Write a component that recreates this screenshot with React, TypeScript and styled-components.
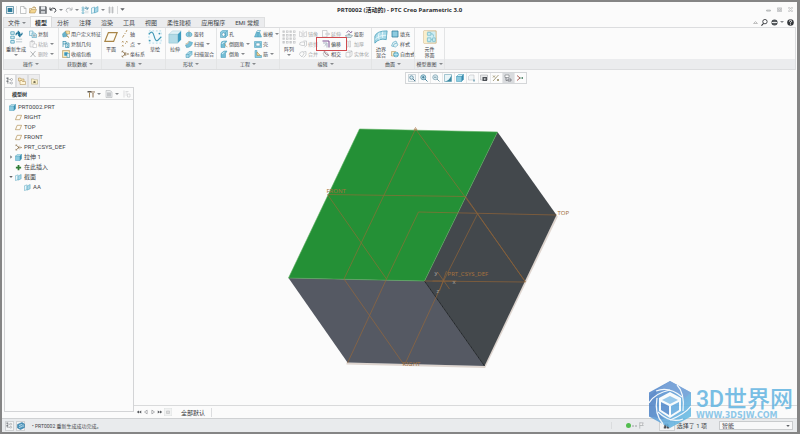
import React from "react";
import styled, { createGlobalStyle, css } from "styled-components";

const GlobalStyle = createGlobalStyle`
  * { box-sizing: border-box; }
  body {
    margin: 0;
    font-family: Roboto, "Noto Sans CJK SC", sans-serif;
    font-size: 6px;
    line-height: 8px;
    color: #414448;
  }
  button, select {
    font: inherit;
    color: inherit;
    border: 0;
    padding: 0;
    margin: 0;
    background: none;
    white-space: nowrap;
  }
`;

/* ---------- icons ---------- */

const TEAL = "#3f97b5";
const SKY = "#a9d8e8";
const INK = "#54585d";
const TAN = "#a98547";
const GREY = "#b4b7ba";

const cube = (
  <>
    <path d="M1 5l4-4h10l-4 4z" fill="#d3eef5" stroke={TEAL} />
    <path d="M11 5l4-4v10l-4 4z" fill="#3789ad" stroke={TEAL} />
    <path d="M1 5h10v10H1z" fill="#8ccbe0" stroke={TEAL} />
  </>
);

const icons: Record<string, React.ReactNode> = {
  app: (
    <>
      <path d="M1 1h14v14H1z" fill="#e5f1f5" stroke="#49809a" strokeWidth="1.5" />
      <path d="M4 4h8v8H4z" fill="#2c7c9c" />
      <path d="M3 4v8M13 4v8" stroke="#7fa7b5" />
    </>
  ),
  page: <path d="M3 1h7l4 4v10H3zM10 1v4h4" fill="#fdfdfd" stroke="#8d9093" />,
  open: (
    <>
      <path d="M1 14V5h5l1-2h6v3" fill="#fbf1d2" stroke={TAN} />
      <path d="M1 14l3-7h11l-3 7z" fill="#f2d590" stroke={TAN} />
      <path d="M8 2q4-2 5 2" fill="none" stroke={TAN} />
    </>
  ),
  save: (
    <>
      <path d="M1 1h13l1 1v13H1z" fill="#75797e" stroke="#5d6166" />
      <path d="M4 1h8v6H4z" fill="#e8eaec" />
      <path d="M4 10h8v5H4z" fill="#c8cbce" />
    </>
  ),
  undo: <path d="M2 3v5h5M2 8q5-6 10-3q4 4-1 8" fill="none" stroke="#3d4146" strokeWidth="2" />,
  redo: <path d="M14 3v5H9M14 8q-5-6-10-3q-4 4 1 8" fill="none" stroke={GREY} strokeWidth="2" />,
  regen: (
    <>
      <path d="M2 2h4v3H2zM2 7h4v3H2zM2 12h4v3H2z" fill="#d8edf3" stroke={TEAL} strokeWidth=".8" />
      <path d="M8 13.5h7M8 10.5h7" stroke="#b4c2c9" />
      <path d="M8 6q0-3 3-3M10 1l2 2-2 2M15 3q0 3-3 3M13 4l-2 2 2 2" fill="none" stroke="#1f7396" strokeWidth="1.3" />
    </>
  ),
  copy: (
    <>
      <path d="M1 2h7v9H1z" fill="#eaf5f8" stroke={TEAL} />
      <path d="M6 6h6l3 3v6H6z" fill="#cfe8f0" stroke={TEAL} />
      <path d="M8 10h5M8 12h5" stroke={INK} strokeWidth=".8" />
    </>
  ),
  paste: (
    <>
      <path d="M2 3h9v11H2zM5 1h3v3H5z" fill="#f3f3f3" stroke={GREY} />
      <path d="M8 8h7v7H8z" fill="#fff" stroke={GREY} />
    </>
  ),
  cross: <path d="M3 3l10 11M13 2L3 14" stroke="#a0a3a6" strokeWidth="1.6" />,
  udf: (
    <>
      <path d="M1 8l5-5 6 2-3 8-7 1z" fill="#69b3cc" stroke={TEAL} />
      <path d="M7 2h8v6H9z" fill="#f6e3a9" stroke={TAN} />
      <path d="M9 11l5 4" stroke={TAN} strokeWidth="2" />
    </>
  ),
  geom: (
    <>
      <path d="M2 2v12M2 3h6v5H2M8 6h6v9H7z" fill="#d6edf3" stroke="#2b86a6" strokeWidth="1.3" />
      <path d="M10 9h2v4h-2" fill="none" stroke="#2b86a6" />
    </>
  ),
  shrink: (
    <>
      <path d="M1 1h14v14H1z" fill="#f2e4ae" stroke={TAN} />
      <path d="M4 4h8v8H4z" fill="#3c97b6" stroke="#fff" />
      <path d="M10 7h5v8h-5z" fill="#dff1f5" stroke={TEAL} />
    </>
  ),
  plane: <path d="M5 3h10l-4 10H1z" fill="#fefcf6" stroke={TAN} strokeWidth="1.4" />,
  axis: <path d="M3 15l3-5M7.5 8l1-2M10 4l2-4" stroke={TAN} strokeWidth="1.6" />,
  point: <path d="M2 2l3 3M5 2L2 5M10 2l3 3M13 2l-3 3M2 10l3 3M5 10l-3 3M8 7h2" stroke={TAN} strokeWidth="1.3" />,
  csys: <path d="M8 8h7M13 6l2 2-2 2M8 8L2 2M2 5V2h3M8 8l-6 6M2 11v3h3M6 4l4 8M10 4l-4 8" fill="none" stroke="#876b43" strokeWidth="1.2" />,
  sketch: (
    <>
      <path d="M1 1h14v14H1z" fill="#f3fafc" stroke={SKY} strokeDasharray="2 2" />
      <path d="M1 5q4-6 6 2t5 4l3-3" fill="none" stroke={TEAL} strokeWidth="1.3" />
      <circle cx="2" cy="12" r="1" fill={TEAL} />
      <circle cx="13" cy="4" r="1" fill={TEAL} />
    </>
  ),
  cube,
  extrude: (
    <>
      <path d="M1 5l4-4h10l-4 4z" fill="#dff1f6" stroke="#a3cbd7" strokeWidth=".6" />
      <path d="M11 5l4-4v10l-4 4z" fill="#3c9cc0" />
      <path d="M1 5h10v10H1z" fill="#b3dbe7" stroke="#8abfd0" strokeWidth=".6" />
    </>
  ),
  revolve: (
    <>
      <path d="M8 1v14" stroke={TAN} strokeDasharray="3 1" />
      <path d="M7 4Q1 6 2 10t5 3zM9 4q6 2 5 6t-5 3z" fill="#8ccbe0" stroke={TEAL} />
    </>
  ),
  sweep: (
    <>
      <path d="M1 10q6 0 8-7l6 2q-2 10-12 10z" fill="#79bfd6" stroke={TEAL} />
      <path d="M1 8q5 0 7-6" fill="none" stroke={TAN} />
    </>
  ),
  blend: (
    <>
      <path d="M2 9l6-6h6v6l-6 6H2z" fill="#a8d8e7" stroke={TEAL} />
      <path d="M2 9h6v6M8 9l6-6" fill="none" stroke={TEAL} />
    </>
  ),
  hole: (
    <>
      <path d="M1 4l4-3h10v10l-4 4H1z" fill="#8ccbe0" stroke={TEAL} />
      <ellipse cx="7" cy="9" rx="3" ry="3.5" fill="#fff" stroke="#2c7c9c" />
      <path d="M11 5v10M11 5l4-4" stroke={TEAL} />
    </>
  ),
  round: (
    <>
      <path d="M2 15V8q0-6 6-6h6l-4 5v8z" fill="#74bdd5" stroke={TEAL} />
      <path d="M10 7q0 6 5 7" fill="none" stroke={TAN} />
      <path d="M4 8q1-4 5-4" fill="none" stroke="#fff" strokeWidth="1.5" />
    </>
  ),
  chamfer: (
    <>
      <path d="M2 15V7l6-5h6l-3 5v8z" fill="#74bdd5" stroke={TEAL} />
      <path d="M4 8l5-4" stroke="#fff" strokeWidth="1.5" />
    </>
  ),
  draft: (
    <>
      <path d="M1 14L5 4h6l4 10z" fill="#74bdd5" stroke={TEAL} />
      <path d="M5 4l2-3h6l-2 3M8 4v10" fill="#def1f6" stroke={TEAL} />
    </>
  ),
  shell: (
    <>
      <path d="M1 3h14v12H1z" fill="#8ccbe0" stroke={TEAL} />
      <path d="M4 6h8v6H4z" fill="#fff" stroke="#2c7c9c" />
    </>
  ),
  rib: (
    <>
      <path d="M2 1h4v10h9v4H2z" fill="#8ccbe0" stroke={TEAL} />
      <path d="M6 4l7 7H6z" fill="#f2dc9a" stroke={TAN} />
    </>
  ),
  pattern: (
    <g fill="#f5f5f5" stroke="#c3c5c7" strokeWidth=".8">
      {[1, 5, 9, 13].map((y) => [1, 5, 9, 13].map((x) => <rect key={`${x}-${y}`} x={x} y={y} width="2" height="2" />))}
    </g>
  ),
  mirror: <path d="M1 3l5 3v7H1zM15 3l-5 3v7h5zM8 1v14" fill="none" stroke={GREY} />,
  trim: <path d="M1 9q0-5 5-5h5v7H6zM9 2h6v9l-4 3" fill="none" stroke={GREY} strokeWidth="1.2" />,
  merge: <path d="M1 9q0-5 6-6l3 4-4 7zM8 4l6-1v7l-5 5" fill="none" stroke={GREY} strokeWidth="1.2" />,
  extend: <path d="M1 1h9v13H1zM6 8h9M12 5l3 3-3 3" fill="none" stroke={GREY} strokeWidth="1.2" />,
  offset: (
    <>
      <path d="M1 2h13v13" fill="none" stroke="#7d4e93" strokeWidth="2" />
      <path d="M2 6h8v9" fill="none" stroke="#8b9ab0" strokeWidth="1.4" />
      <path d="M4 13l4-4M8 11V9H6" fill="none" stroke="#9ca9ba" />
    </>
  ),
  intersect: (
    <>
      <path d="M2 6q5-5 9 0t-2 8q-6 0-7-8z" fill="#f5f5f5" stroke="#999ca0" />
      <path d="M4 2q2 7 10 9" fill="none" stroke="#8c5c6a" strokeWidth="1.5" />
    </>
  ),
  project: (
    <>
      <path d="M1 11q6-4 14 0l-3 4H3z" fill="#d3e4e9" stroke="#69808a" />
      <path d="M3 5q5-6 7-1t4-2" fill="none" stroke="#704b87" strokeWidth="1.4" />
      <path d="M8 6v5" stroke={INK} />
    </>
  ),
  thicken: <path d="M3 2h3v12H3zM8 2h3v12H8z" fill="none" stroke={GREY} />,
  solidify: <path d="M2 5h8v9H2zM5 2h9v9l-4 3M10 5l4-3" fill="none" stroke={GREY} strokeWidth="1.2" />,
  boundary: (
    <>
      <path d="M1 7Q3 1 15 1q-1 7-1 10Q6 9 1 15z" fill="#a8dae9" stroke="#54a5be" />
      <path d="M1 11q4-5 13-5M6 3q-2 4 0 8M10 2q-1 3 0 7" fill="none" stroke="#eef9fc" />
    </>
  ),
  fill: <path d="M2 2h12v12H2z" fill="#8ccbe0" stroke="#2c7c9c" strokeWidth="1.5" />,
  style: (
    <>
      <path d="M1 12Q2 3 10 2l4 8-5 4z" fill="#def1f6" stroke={TEAL} />
      <path d="M4 13q1-7 8-7" fill="none" stroke={TEAL} />
    </>
  ),
  freestyle: (
    <>
      <path d="M1 3h8v9H1z" fill="#f7edc9" stroke={TAN} />
      <circle cx="10" cy="9" r="5" fill="#74bdd5" stroke={TEAL} />
      <path d="M6 9h8M10 4v10" stroke="#e3f5fa" />
    </>
  ),
  iface: (
    <>
      <path d="M1 1h14v14H1z" fill="#d0edf3" stroke="#d3b57d" />
      <path d="M1 1h4v14H1z" fill="#faeecb" />
      <path d="M5 3h4v3H5zM9 4.500q3-1 3 3M5 9h4v4H5zM11 9h3v4h-3zM9 11h2" fill="none" stroke="#6db7c6" strokeWidth=".8" />
    </>
  ),
  tree: (
    <>
      <path d="M3 3v10M3 5h7M3 12h7" fill="none" stroke="#797d81" />
      <path d="M1 1h4v3H1zM1 7h4v3H1z" fill="#777b80" />
      <circle cx="11" cy="5" r="2" fill="#fff" stroke="#777b80" />
      <circle cx="11" cy="12" r="2" fill="#fff" stroke="#777b80" />
    </>
  ),
  folders: (
    <>
      <path d="M1 8V2h4l1 2h6v5z" fill="#f8e6b8" stroke={TAN} />
      <path d="M4 14V7h4l1 2h6v6H4z" fill="#fff5d8" stroke={TAN} />
    </>
  ),
  favorite: (
    <>
      <path d="M1 14V2h5l1 2h8v10z" fill="#fdf2cb" stroke="#9d9365" />
      <path d="M8 6l1 2h2l-1 2 1 2-3-1-3 1 1-2-1-2h2z" fill="#5b563e" />
    </>
  ),
  tools: (
    <>
      <path d="M1 2h8v3H1z" fill="#5e5952" />
      <path d="M5 5v10" stroke="#a78a56" strokeWidth="2" />
      <path d="M12 7v8M10 2v3l2 2 2-2V2" fill="none" stroke="#8b6f4e" strokeWidth="2" />
    </>
  ),
  sheet: (
    <>
      <path d="M2 1h8l4 3v11H2z" fill="#eef0f1" stroke="#a6a9ac" />
      <path d="M4 6h8M4 8h8M4 10h8M4 12h8" stroke="#8f9396" />
    </>
  ),
  filter: <path d="M2 1v14M5 3h6M5 6h4M9 8h5v6H9zM5 10h3" fill="none" stroke="#c6c8ca" strokeWidth="1.2" />,
  insert: <path d="M8 2v12M2 8h12" stroke="#2f7b34" strokeWidth="4" />,
  section: (
    <>
      <path d="M1 4l6-2v11l-6 2z" fill="#e9f6fa" stroke={TEAL} />
      <path d="M7 5l7-4v10l-7 3z" fill="#a9d8e8" stroke={TEAL} />
    </>
  ),
  zoomfit: (
    <>
      <path d="M1 1h14v14H1z" fill="#f3f6f8" stroke="#9fb0ba" />
      <circle cx="7" cy="7" r="3.5" fill="#d9edf4" stroke="#4c7d94" strokeWidth="1.5" />
      <path d="M10 10l4 4" stroke="#4c7d94" strokeWidth="2" />
    </>
  ),
  zoomin: (
    <>
      <circle cx="6.5" cy="6.5" r="5" fill="#c5e4ee" stroke="#47869f" strokeWidth="1.5" />
      <path d="M10 10l5 5M4 6.5h5M6.5 4v5" stroke="#2f6f8a" strokeWidth="1.7" />
    </>
  ),
  zoomout: (
    <>
      <circle cx="6.5" cy="6.5" r="5" fill="#dcebf0" stroke="#7ba1b1" strokeWidth="1.5" />
      <path d="M10 10l5 5M4 6.5h5" stroke="#6b909f" strokeWidth="1.7" />
    </>
  ),
  repaint: (
    <>
      <path d="M1 1h14v14H1z" fill="#e9f5f8" stroke="#5794a8" />
      <path d="M15 2v13H2q9-2 13-13z" fill="#3d8ba5" />
    </>
  ),
  views: (
    <>
      <path d="M1 5l3-3h8v10H1z" fill="#f2f6f7" stroke={GREY} />
      <path d="M10 11h4v4h-4z" fill="#8cb4c3" />
    </>
  ),
  viewmgr: (
    <>
      <path d="M1 2h14v10H1z" fill="#e7e9ea" stroke="#999ca0" />
      <path d="M5 6h9v8H5z" fill="#4d5156" />
      <circle cx="9.5" cy="10" r="2" fill="#c0c4c8" />
    </>
  ),
  datum: <path d="M2 14L13 2M2 3l4 4M6 3L2 7M10 10l4 4M14 10l-4 4" stroke="#8e8359" strokeWidth="1.5" />,
  annot: (
    <>
      <path d="M2 2h8v5H2z" fill="#fff" stroke="#5d6166" />
      <path d="M8 10h6v4H8zM4 7v6h3" fill="none" stroke="#5d6166" strokeWidth="1.3" />
    </>
  ),
  spin: (
    <>
      <path d="M2 3l6 5-6 5" fill="none" stroke="#b2605a" strokeWidth="2" />
      <path d="M7 8h7M12 6l2 2-2 2" fill="none" stroke="#4d8064" strokeWidth="1.6" />
    </>
  ),
  windows: <path d="M5 1v14M11 1v14M2 4h12M2 8h12M2 12h12" stroke="#97999c" />,
  up: <path d="M2 11l6-6 6 6z" fill="#fff" stroke="#777" strokeWidth="1.5" />,
  search: (
    <>
      <circle cx="9" cy="6" r="5" fill="#fff" stroke="#33363a" strokeWidth="2" />
      <path d="M6 10l-5 5" stroke="#33363a" strokeWidth="2.5" />
    </>
  ),
  connect: (
    <>
      <circle cx="8" cy="8" r="7" fill="#44484c" />
      <path d="M2 8h12" stroke="#fff" strokeWidth="2" />
      <path d="M5 5h6M5 11h6" stroke="#aeb0b3" />
    </>
  ),
  help: (
    <>
      <circle cx="8" cy="8" r="7.5" fill="#33363a" />
      <path d="M5.5 6q0-3 2.5-3t2.5 2.5Q10.500 7 8 8v2M8 11v2" fill="none" stroke="#fff" strokeWidth="2" />
    </>
  ),
  minimize: <path d="M2 10h12v3H2z" fill="#fff" stroke="#74777a" strokeWidth="1.5" />,
  maximize: <path d="M1 3h14v11H1zM5 6h6v5H5z" fill="none" stroke="#85888b" strokeWidth="1.5" />,
  close: <path d="M1 2h5l2 4 2-4h5l-4 6 4 6h-5l-2-4-2 4H1l4-6z" fill="#fff" stroke="#85888b" strokeWidth="1.2" />,
  first: <path d="M8 4v8L2 8zM14 4v8L8 8z" fill="#55585c" />,
  prev: <path d="M11 3v10L4 8z" fill="#fff" stroke="#777a7e" strokeWidth="1.5" />,
  next: <path d="M5 3v10l7-5z" fill="#fff" stroke="#777a7e" strokeWidth="1.5" />,
  last: <path d="M2 4v8l6-4zM8 4v8l6-4z" fill="#55585c" />,
  add: (
    <>
      <path d="M0 0h16v16H0z" fill="#f1f2f2" stroke="#d3d5d6" />
      <path d="M5 6h6v5H5z" fill="#ddd" stroke="#b5b7b9" />
    </>
  ),
  browser: (
    <>
      <path d="M1 5l9-4 5 3v7l-8 4-6-3z" fill="#4792bb" stroke="#2f7398" />
      <path d="M4 7l6-2M4 11l6-2M12 5v5" stroke="#e3f2f8" strokeWidth="1.5" />
    </>
  ),
  flag: <path d="M4 1v14M4 2h8l-2 3 2 3H4" fill="#f6f6f6" stroke="#8e9194" strokeWidth="1.2" />,
  find: <path d="M2 14l2-8 3-2v10zM9 14V4l3 2 2 8zM7 8h2" fill="#4a4e53" stroke="#4a4e53" />,
  right: <path d="M5 1l8 7-8 7z" fill="#777a7e" />,
  down: <path d="M1 4h14l-7 8z" fill="#606367" />,
};

const Glyph = styled.svg<{ $size: number }>`
  width: ${(p) => p.$size}px;
  height: ${(p) => p.$size}px;
  flex: none;
  display: block;
`;

const Icon = ({ name, size = 8 }: { name: string; size?: number }) => (
  <Glyph $size={size} viewBox="0 0 16 16" aria-hidden="true" strokeWidth="1">
    {icons[name]}
  </Glyph>
);

const Caret = styled.span`
  flex: none;
  width: 0;
  height: 0;
  margin-left: 2px;
  border: 2px solid transparent;
  border-top-color: #85888b;
  border-bottom: 0;
`;

/* ---------- window frame ---------- */

const Window = styled.div`
  position: relative;
  display: flex;
  flex-direction: column;
  height: 100vh;
  border: 2px solid #858585;
  border-right-width: 3px;
  background: #fbfbfb;
  overflow: hidden;
`;

const TitleBar = styled.header`
  display: grid;
  grid-template-columns: 1fr auto 1fr;
  align-items: center;
  height: 15px;
  flex: none;
  padding: 0 4px;
`;

const QuickAccess = styled.div`
  display: flex;
  align-items: center;
  gap: 2px;
`;

const IconButton = styled.button`
  display: flex;
  align-items: center;
  justify-content: center;
`;

const Divider = styled.span`
  width: 1px;
  height: 8px;
  background: #d9dadb;
`;

const Title = styled.h1`
  margin: 0;
  font-family: "Open Sans", "Noto Sans CJK SC", sans-serif;
  font-size: 6px;
  line-height: 10px;
  font-weight: 700;
  color: #2b2d30;
`;

const WindowControls = styled.div`
  display: flex;
  justify-content: flex-end;
  gap: 6px;
`;

const TabStrip = styled.nav`
  display: flex;
  align-items: stretch;
  justify-content: space-between;
  height: 10px;
  flex: none;
  padding: 0 3px 0 1px;
`;

const Tabs = styled.div`
  display: flex;
  background: #ebecee;
  border: 1px solid #dedfe0;
  border-bottom: 0;
`;

const Tab = styled.button<{ $active?: boolean }>`
  display: flex;
  align-items: center;
  padding: 0 5px;
  line-height: 9px;
  ${(p) =>
    p.$active &&
    css`
      margin-top: -2px;
      background: #fbfbfb;
      border: 1px solid #dadbdc;
      border-bottom: 0;
      padding: 0 4px;
      font-weight: 700;
      color: #35383b;
    `}
`;

const FileTab = styled(Tab)`
  padding: 0 4px;
`;

const HelpTools = styled.div`
  display: flex;
  align-items: center;
  gap: 3px;
`;

/* ---------- ribbon ---------- */

const Ribbon = styled.section`
  display: flex;
  flex: none;
  height: 43px;
  margin: 0 1px;
  border: 1px solid #dcdddf;
`;

const Group = styled.div<{ $width?: number }>`
  display: flex;
  flex-direction: column;
  ${(p) => (p.$width ? `flex: none; width: ${p.$width}px;` : "flex: 1;")}
  & + & { border-left: 1px solid #e3e4e5; }
`;

const GroupBody = styled.div<{ $centered?: boolean }>`
  display: flex;
  flex: 1;
  justify-content: ${(p) => (p.$centered ? "center" : "flex-start")};
  gap: 2px;
  padding: 1px 2px 0;
`;

const GroupLabel = styled.div`
  display: flex;
  align-items: center;
  justify-content: center;
  height: 10px;
  font-size: 5px;
  background: #ebecee;
  white-space: nowrap;
`;

const BigButton = styled.button`
  display: flex;
  flex-direction: column;
  align-items: center;
  flex: none;
  min-width: 14px;
  padding-top: 1px;
  gap: 2px;
  font-size: 5px;
  line-height: 6px;
  white-space: pre;
  ${Caret} { margin: 0; }
`;

const Column = styled.div`
  display: flex;
  flex-direction: column;
  flex: none;
`;

const ToolButton = styled.button<{ $marked?: boolean }>`
  display: flex;
  align-items: center;
  gap: 1px;
  height: 10px;
  padding: 0 1px;
  font-size: 5px;
  line-height: 8px;
  &:disabled { color: #a5a7a9; }
  ${Caret} { margin-left: 1px; }
  ${(p) =>
    p.$marked &&
    css`
      position: relative;
      &::after {
        content: "";
        position: absolute;
        inset: -2px -5px;
        border: 1px solid #d04a4f;
      }
    `}
`;

type Tool = { icon: string; label: string; menu?: boolean; off?: boolean; marked?: boolean };

const ToolColumn = ({ items }: { items: Tool[] }) => (
  <Column>
    {items.map((t) => (
      <ToolButton key={t.label} disabled={t.off} $marked={t.marked}>
        <Icon name={t.icon} size={8} />
        {t.label}
        {t.menu && <Caret />}
      </ToolButton>
    ))}
  </Column>
);

const Big = ({ icon, label, menu }: { icon: string; label: string; menu?: boolean }) => (
  <BigButton>
    <Icon name={icon} size={14} />
    <span>{label}</span>
    {menu && <Caret />}
  </BigButton>
);

/* ---------- workspace ---------- */

const Workspace = styled.div`
  display: flex;
  flex: 1;
  min-height: 0;
`;

const Sidebar = styled.aside`
  display: flex;
  flex-direction: column;
  flex: none;
  width: 132px;
  padding: 4px 0 6px 2px;
`;

const PanelTabs = styled.div`
  display: flex;
  height: 13px;
`;

const PanelTab = styled.button<{ $active?: boolean }>`
  display: flex;
  align-items: center;
  justify-content: center;
  width: 12px;
  border: 1px solid #dcdddf;
  border-bottom: 0;
  background: ${(p) => (p.$active ? "#fbfbfb" : "#ededee")};
`;

const TreePanel = styled.section`
  flex: 1;
  border: 1px solid #d3d4d6;
`;

const TreeHeader = styled.div`
  display: flex;
  align-items: center;
  gap: 4px;
  height: 12px;
  padding: 0 2px 0 7px;
  border-bottom: 1px solid #dcdddf;
`;

const TreeTitle = styled.h2`
  flex: 1;
  margin: 0;
  font-size: 5px;
  line-height: 8px;
  color: #303236;
`;

const TreeList = styled.ul`
  margin: 0;
  padding: 2px 0 0 4px;
  list-style: none;
`;

const TreeRow = styled.li<{ $level: number }>`
  display: flex;
  align-items: center;
  gap: 2px;
  height: 10px;
  padding-left: ${(p) => p.$level * 9}px;
`;

const Toggle = styled.span`
  flex: none;
  width: 4px;
`;

const Viewport = styled.main`
  position: relative;
  display: flex;
  flex-direction: column;
  flex: 1;
  min-width: 0;
`;

const Scene = styled.svg`
  display: block;
  width: 100%;
  flex: 1;
  min-height: 0;
  border-bottom: 1px solid #d9dadb;
`;

const ViewTools = styled.div`
  position: absolute;
  top: 2px;
  left: 50%;
  transform: translateX(-50%);
  display: flex;
  border: 1px solid #d4d6d8;
  background: #fcfcfc;
`;

const ViewButton = styled(IconButton)<{ $on?: boolean }>`
  width: 12px;
  height: 10px;
  background: ${(p) => (p.$on ? "#d9dbde" : "transparent")};
  & + & { border-left: 1px solid #e7e8e9; }
`;

const SheetBar = styled.div`
  display: flex;
  align-items: center;
  flex: none;
  gap: 1px;
  height: 12px;
  padding-left: 2px;
`;

const SheetTab = styled.button`
  height: 9px;
  margin-left: 2px;
  padding: 0 6px;
  border-right: 1px solid #dcdddf;
  line-height: 9px;
  color: #303236;
`;

/* ---------- status bar ---------- */

const StatusBar = styled.footer`
  display: flex;
  align-items: center;
  flex: none;
  gap: 2px;
  height: 14px;
  padding: 0 4px 0 3px;
  background: #e9ebed;
  border-top: 1px solid #cfd1d3;
`;

const StatusButton = styled(IconButton)<{ $wide?: boolean }>`
  width: ${(p) => (p.$wide ? 16 : 9)}px;
  height: 10px;
  border: 1px solid #cfd1d3;
  background: #f3f4f5;
`;

const Message = styled.p`
  flex: 1;
  margin: 0 0 0 5px;
  font-size: 5px;
`;

const Signal = styled.div`
  display: flex;
  align-items: center;
  gap: 1px;
  margin-right: 12px;
  padding-left: 14px;
  border-left: 1px solid #dadcde;
`;

const Lamp = styled.i<{ $on?: boolean }>`
  width: ${(p) => (p.$on ? 5 : 2)}px;
  height: ${(p) => (p.$on ? 5 : 2)}px;
  border-radius: 50%;
  background: ${(p) => (p.$on ? "#52bd4f" : "#b4b6b8")};
`;

const FilterLabel = styled.label`
  display: flex;
  align-items: center;
  gap: 12px;
  white-space: nowrap;
`;

const SelectBox = styled.span`
  display: flex;
  align-items: center;
  width: 74px;
  height: 9px;
  padding-right: 2px;
  border: 1px solid #c9cbcd;
  background: #f8f8f9;
`;

const Select = styled.select`
  appearance: none;
  flex: 1;
  padding-left: 2px;
  line-height: 7px;
  outline: 0;
`;

/* ---------- watermark ---------- */

const Watermark = styled.div`
  position: absolute;
  right: 4px;
  bottom: 4px;
  display: flex;
  align-items: flex-start;
  gap: 5px;
  opacity: 0.85;
  pointer-events: none;
`;

const Brand = styled.div`
  display: flex;
  flex-direction: column;
  padding-top: 7px;
`;

const BrandName = styled.strong`
  font-family: Roboto, "Noto Sans CJK SC", sans-serif;
  font-size: 23px;
  line-height: 24px;
  font-weight: 500;
  color: #62b4e1;
  white-space: nowrap;
`;

const BrandUrl = styled.span`
  font-family: "DejaVu Sans", sans-serif;
  font-size: 8px;
  line-height: 8px;
  font-weight: 700;
  color: #7cc0e6;
  white-space: nowrap;
`;

const HexMark = styled.svg`
  width: 42px;
  height: 47px;
  flex: none;
`;

const Logo = () => (
  <HexMark viewBox="0 0 42 47" aria-hidden="true">
    <defs>
      <linearGradient id="hexShade" x1="0" y1="0" x2="1" y2="1">
        <stop offset="0" stopColor="#4a78c2" />
        <stop offset=".5" stopColor="#5c9fd8" />
        <stop offset="1" stopColor="#66c6e8" />
      </linearGradient>
    </defs>
    <path d="M21 0l21 11.500v24L21 47 0 35.500v-24z" fill="url(#hexShade)" />
    <path d="M21 0l21 11.500-7 6Q27 8 8 9z" fill="#6a95d3" opacity=".7" />
    <path d="M0 35.500v-20l8-7Q5 22 9 31l6 7z" fill="#3f72bb" opacity=".5" />
    <g fill="none" stroke="#f4f9fd" strokeWidth="1.200">
      <path d="M7 10Q20 5 33 16" />
      <path d="M28 4Q36 12 34 30" />
      <path d="M42 25Q36 33 21 39" />
      <path d="M34 38Q22 43 9 31" />
      <path d="M14 43Q5 33 8 17" />
      <path d="M0 22Q6 12 21 9" />
    </g>
    <path d="M21 11l11 6v13l-11 7-11-7V17z" fill="#f8fbfd" />
    <path d="M21 15l8 4-8 4-8-4z" fill="#86c0e9" />
    <path d="M12 21l8 4v9l-8-5z" fill="#4d86ca" />
    <path d="M30 21l-8 4v9l8-5z" fill="#5fa8de" />
  </HexMark>
);

const ModelScene = () => (
  <Scene viewBox="134 70 662 335" role="img" aria-label="PRT0002">
    <path d="M346 363.500l138 3.500 72.500-151" fill="none" stroke="#ded5cf" strokeWidth="2" />
    <path d="M359 129l138 3-73 149-136-3z" fill="#249036" />
    <path d="M288 278l136 3 60 85-137-3.500z" fill="#555963" />
    <path d="M497 132l59 83-72 151-60-85z" fill="#43484c" />
    <path d="M288 278l71-149 138 3-73 149z" fill="none" stroke="#55ad59" strokeWidth=".6" />
    <path d="M424 281l60 85" stroke="#24282b" />
    <g fill="none" stroke="#a06a35" strokeWidth=".8" opacity=".75">
      <path d="M415 129l-71.500 150L403 364M415 129l62 85 48 68" />
      <path d="M327 194.500l138 2M327 194.500l59 84.500-39 84M386 279l32-67 138 3" />
      <path d="M477 214l-34 67-38 82M465 196.500l60 85.500-101-1" />
      <path d="M432 281h24M437 272l12 17M446 271l-7 20" />
      <path d="M413.500 130l1.500-2.500 1.500 2.500z" />
    </g>
    <g fontFamily="Noto Sans, sans-serif" fontSize="6" fill="#a3713f">
      <text x="326" y="193">FRONT</text>
      <text x="557" y="215">TOP</text>
      <text x="447" y="276">PRT_CSYS_DEF</text>
      <text x="402" y="366">RIGHT</text>
      <g fill="#a6a2a0">
        <text x="434" y="275">y</text>
        <text x="452" y="284">x</text>
        <text x="436" y="293">z</text>
      </g>
    </g>
  </Scene>
);

const viewTools = ["zoomfit", "zoomin", "zoomout", "repaint", "cube", "views", "viewmgr", "datum", "annot", "spin"];
const ribbonTabs = ["分析", "注释", "渲染", "工具", "视图", "柔性建模", "应用程序", "EMI 常规"];

const treeItems = [
  { level: 0, icon: "plane", text: "RIGHT" },
  { level: 0, icon: "plane", text: "TOP" },
  { level: 0, icon: "plane", text: "FRONT" },
  { level: 0, icon: "csys", text: "PRT_CSYS_DEF" },
  { level: 0, icon: "cube", text: "拉伸 1", toggle: "right" },
  { level: 0, icon: "insert", text: "在此插入" },
  { level: 0, icon: "section", text: "截面", toggle: "down" },
  { level: 1, icon: "section", text: "AA" },
];

export default function App() {
  return (
    <>
      <GlobalStyle />
      <Window>
        <TitleBar>
          <QuickAccess>
            <IconButton aria-label="应用程序"><Icon name="app" /></IconButton>
            <Divider />
            <IconButton aria-label="新建"><Icon name="page" /></IconButton>
            <IconButton aria-label="打开"><Icon name="open" /></IconButton>
            <IconButton aria-label="保存"><Icon name="save" /></IconButton>
            <IconButton aria-label="撤消"><Icon name="undo" /><Caret /></IconButton>
            <IconButton aria-label="重做"><Icon name="redo" /><Caret /></IconButton>
            <IconButton aria-label="重新生成"><Icon name="regen" /></IconButton>
            <IconButton aria-label="窗口"><Icon name="section" /><Caret /></IconButton>
            <IconButton aria-label="关闭窗口"><Icon name="windows" /></IconButton>
            <Divider />
            <IconButton aria-label="自定义"><Icon name="down" size={5} /></IconButton>
          </QuickAccess>
          <Title>PRT0002 (活动的) - PTC Creo Parametric 3.0</Title>
          <WindowControls>
            <IconButton aria-label="最小化"><Icon name="minimize" size={5} /></IconButton>
            <IconButton aria-label="最大化"><Icon name="maximize" size={5} /></IconButton>
            <IconButton aria-label="关闭"><Icon name="close" size={5} /></IconButton>
          </WindowControls>
        </TitleBar>

        <TabStrip>
          <Tabs>
            <FileTab>文件<Caret /></FileTab>
            <Tab $active>模型</Tab>
            {ribbonTabs.map((t) => <Tab key={t}>{t}</Tab>)}
          </Tabs>
          <HelpTools>
            <IconButton aria-label="折叠"><Icon name="up" size={5} /></IconButton>
            <IconButton aria-label="搜索"><Icon name="search" size={7} /></IconButton>
            <IconButton aria-label="连接"><Icon name="connect" size={7} /><Caret /></IconButton>
            <IconButton aria-label="帮助"><Icon name="help" size={7} /></IconButton>
          </HelpTools>
        </TabStrip>

        <Ribbon>
          <Group $width={54}>
            <GroupBody>
              <Big icon="regen" label="重新生成" menu />
              <ToolColumn items={[
                { icon: "copy", label: "复制" },
                { icon: "paste", label: "粘贴", menu: true, off: true },
                { icon: "cross", label: "删除", menu: true, off: true },
              ]} />
            </GroupBody>
            <GroupLabel>操作<Caret /></GroupLabel>
          </Group>
          <Group $width={43}>
            <GroupBody>
              <ToolColumn items={[
                { icon: "udf", label: "用户定义特征" },
                { icon: "geom", label: "复制几何" },
                { icon: "shrink", label: "收缩包络" },
              ]} />
            </GroupBody>
            <GroupLabel>获取数据<Caret /></GroupLabel>
          </Group>
          <Group $width={64}>
            <GroupBody>
              <Big icon="plane" label="平面" />
              <ToolColumn items={[
                { icon: "axis", label: "轴" },
                { icon: "point", label: "点", menu: true },
                { icon: "csys", label: "坐标系" },
              ]} />
              <Big icon="sketch" label="草绘" />
            </GroupBody>
            <GroupLabel>基准<Caret /></GroupLabel>
          </Group>
          <Group $width={51}>
            <GroupBody>
              <Big icon="extrude" label="拉伸" />
              <ToolColumn items={[
                { icon: "revolve", label: "旋转" },
                { icon: "sweep", label: "扫描", menu: true },
                { icon: "blend", label: "扫描混合" },
              ]} />
            </GroupBody>
            <GroupLabel>形状<Caret /></GroupLabel>
          </Group>
          <Group $width={63}>
            <GroupBody>
              <ToolColumn items={[
                { icon: "hole", label: "孔" },
                { icon: "round", label: "倒圆角", menu: true },
                { icon: "chamfer", label: "倒角", menu: true },
              ]} />
              <ToolColumn items={[
                { icon: "draft", label: "拔模", menu: true },
                { icon: "shell", label: "壳" },
                { icon: "rib", label: "筋", menu: true },
              ]} />
            </GroupBody>
            <GroupLabel>工程<Caret /></GroupLabel>
          </Group>
          <Group $width={92}>
            <GroupBody>
              <Big icon="pattern" label="阵列" menu />
              <ToolColumn items={[
                { icon: "mirror", label: "镜像", off: true },
                { icon: "trim", label: "修剪", off: true },
                { icon: "merge", label: "合并", off: true },
              ]} />
              <ToolColumn items={[
                { icon: "extend", label: "延伸", off: true },
                { icon: "offset", label: "偏移", marked: true },
                { icon: "intersect", label: "相交" },
              ]} />
              <ToolColumn items={[
                { icon: "project", label: "投影" },
                { icon: "thicken", label: "加厚", off: true },
                { icon: "solidify", label: "实体化", off: true },
              ]} />
            </GroupBody>
            <GroupLabel>编辑<Caret /></GroupLabel>
          </Group>
          <Group $width={43}>
            <GroupBody>
              <Big icon="boundary" label={"边界\n混合"} />
              <ToolColumn items={[
                { icon: "fill", label: "填充" },
                { icon: "style", label: "样式" },
                { icon: "freestyle", label: "自由式" },
              ]} />
            </GroupBody>
            <GroupLabel>曲面<Caret /></GroupLabel>
          </Group>
          <Group $width={30}>
            <GroupBody $centered>
              <Big icon="iface" label={"元件\n界面"} />
            </GroupBody>
            <GroupLabel>模型意图<Caret /></GroupLabel>
          </Group>
          <Group>
            <GroupBody />
            <GroupLabel />
          </Group>
        </Ribbon>

        <Workspace>
          <Sidebar>
            <PanelTabs>
              <PanelTab $active aria-label="模型树"><Icon name="tree" size={8} /></PanelTab>
              <PanelTab aria-label="文件夹浏览器"><Icon name="folders" /></PanelTab>
              <PanelTab aria-label="收藏夹"><Icon name="favorite" size={7} /></PanelTab>
            </PanelTabs>
            <TreePanel>
              <TreeHeader>
                <TreeTitle>模型树</TreeTitle>
                <IconButton aria-label="设置"><Icon name="tools" /><Caret /></IconButton>
                <IconButton aria-label="显示"><Icon name="sheet" /><Caret /></IconButton>
                <IconButton aria-label="过滤器"><Icon name="filter" /></IconButton>
              </TreeHeader>
              <TreeList>
                <TreeRow $level={0}><Icon name="cube" size={7} />PRT0002.PRT</TreeRow>
                {treeItems.map((item) => (
                  <TreeRow key={item.text} $level={item.level}>
                    <Toggle>{item.toggle && <Icon name={item.toggle} size={4} />}</Toggle>
                    <Icon name={item.icon} size={7} />
                    {item.text}
                  </TreeRow>
                ))}
              </TreeList>
            </TreePanel>
          </Sidebar>
          <Viewport>
            <ModelScene />
            <ViewTools>
              {viewTools.map((name) => (
                <ViewButton key={name} $on={name === "annot"} aria-label={name}>
                  <Icon name={name} />
                </ViewButton>
              ))}
            </ViewTools>
            <SheetBar>
              <IconButton aria-label="首页"><Icon name="first" size={6} /></IconButton>
              <IconButton aria-label="上一页"><Icon name="prev" size={6} /></IconButton>
              <IconButton aria-label="下一页"><Icon name="next" size={6} /></IconButton>
              <IconButton aria-label="末页"><Icon name="last" size={6} /></IconButton>
              <IconButton aria-label="添加"><Icon name="add" /></IconButton>
              <SheetTab>全部默认</SheetTab>
            </SheetBar>
          </Viewport>
        </Workspace>

        <StatusBar>
          <StatusButton aria-label="导航器"><Icon name="tree" size={7} /></StatusButton>
          <StatusButton aria-label="浏览器"><Icon name="browser" size={8} /></StatusButton>
          <Message>• PRT0002 重新生成成功完成。</Message>
          <Signal>
            <Lamp $on />
            <Lamp />
            <Lamp />
            <Icon name="flag" size={7} />
          </Signal>
          <StatusButton $wide aria-label="查找"><Icon name="find" size={7} /></StatusButton>
          <FilterLabel>
            选择了 1 项
            <SelectBox>
              <Select defaultValue="smart">
                <option value="smart">智能</option>
              </Select>
              <Icon name="down" size={4} />
            </SelectBox>
          </FilterLabel>
        </StatusBar>
        <Watermark>
          <Logo />
          <Brand>
            <BrandName>3D世界网</BrandName>
            <BrandUrl>WWW.3DSJW.COM</BrandUrl>
          </Brand>
        </Watermark>
      </Window>
    </>
  );
}
